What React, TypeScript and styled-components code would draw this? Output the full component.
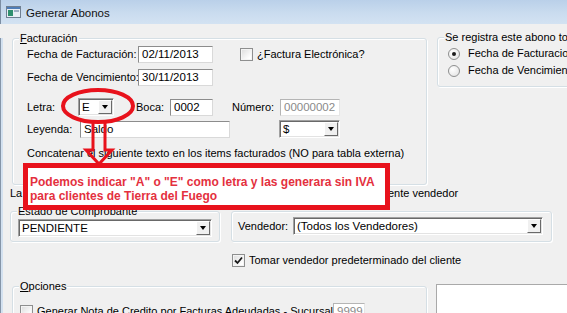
import React from 'react';
import styled, { createGlobalStyle } from 'styled-components';

const GlobalStyle = createGlobalStyle`
  html, body {
    margin: 0;
    padding: 0;
    background: #f0f0f0;
    overflow: hidden;
  }
  body {
    font-family: "Liberation Sans", Arial, sans-serif;
    font-size: 11px;
    color: #000;
  }
`;

const Window = styled.div`
  position: relative;
  width: 567px;
  height: 313px;
  overflow: hidden;
  background: #f0f0f0;
`;

const TitleBar = styled.div`
  height: 24px;
  box-sizing: border-box;
  display: flex;
  align-items: center;
  gap: 5px;
  padding-left: 6px;
  background: linear-gradient(#bad0e9, #cadcef 55%, #d3e2f2);
  box-shadow: inset 1px 0 0 #7d8ea3;
`;

const Title = styled.span`
  font-size: 11.5px;
  color: #111;
  padding-top: 1px;
`;

const Body = styled.div`
  height: 289px;
  box-shadow: inset 1px 0 0 #8595a8, inset 3px 0 0 #d3e1f0;
`;

const Row = styled.div<{ $top?: number; $left?: number; $gap?: number }>`
  display: flex;
  align-items: flex-start;
  margin-top: ${p => p.$top ?? 0}px;
  padding-left: ${p => p.$left ?? 0}px;
  gap: ${p => p.$gap ?? 0}px;
`;

const Group = styled.div<{ $w: number; $h: number; $shift?: number }>`
  position: relative;
  box-sizing: border-box;
  width: ${p => p.$w}px;
  height: ${p => p.$h}px;
  flex: none;
  margin-top: ${p => p.$shift ?? 0}px;
  border: 1px solid #d5dfe5;
  border-radius: 3px;
  box-shadow: inset 1px 1px 0 #fff, 1px 1px 0 #fff;
`;

const Legend = styled.span`
  position: absolute;
  top: -7px;
  left: 6px;
  padding: 0 1px;
  line-height: 13px;
  background: #f0f0f0;
  white-space: nowrap;
  u { text-decoration: underline; }
`;

const GroupBody = styled.div<{ $pt: number; $pl: number }>`
  padding: ${p => p.$pt}px 0 0 ${p => p.$pl}px;
`;

const Line = styled.div<{ $top?: number }>`
  display: flex;
  align-items: center;
  margin-top: ${p => p.$top ?? 0}px;
`;

const Label = styled.span<{ $w?: number; $ml?: number }>`
  flex: none;
  width: ${p => (p.$w ? `${p.$w}px` : 'auto')};
  margin-left: ${p => p.$ml ?? 0}px;
  line-height: 13px;
  white-space: nowrap;
`;

const Field = styled.div<{ $w: number; $muted?: boolean; $ml?: number }>`
  flex: none;
  box-sizing: border-box;
  width: ${p => p.$w}px;
  height: 17px;
  margin-left: ${p => p.$ml ?? 0}px;
  padding: 0 3px;
  background: #fff;
  border: 1px solid;
  border-color: ${p => (p.$muted ? '#b5b5b5 #e6e6e6 #e6e6e6 #b5b5b5' : '#8c8c8c #d9d9d9 #d9d9d9 #8c8c8c')};
  font-size: 11.5px;
  line-height: 15px;
  color: ${p => (p.$muted ? '#8a8a8a' : '#000')};
  white-space: nowrap;
  overflow: hidden;
`;

const Combo = styled.div<{ $w: number; $ml?: number }>`
  flex: none;
  display: flex;
  box-sizing: border-box;
  width: ${p => p.$w}px;
  height: 18px;
  margin-left: ${p => p.$ml ?? 0}px;
  background: #fff;
  border: 1px solid;
  border-color: #a0a0a0 #fff #fff #a0a0a0;
  box-shadow: inset 1px 1px 0 #696969, inset -1px -1px 0 #e3e3e3;
`;

const ComboText = styled.div`
  flex: 1;
  padding: 0 2px 0 3px;
  font-size: 11.5px;
  line-height: 16px;
  white-space: nowrap;
  overflow: hidden;
`;

const DropBtn = styled.div`
  flex: none;
  box-sizing: border-box;
  width: 14px;
  margin: 1px 1px 1px 0;
  display: flex;
  align-items: center;
  justify-content: center;
  background: #f0f0f0;
  border: 1px solid;
  border-color: #fff #696969 #696969 #fff;
  &::after {
    content: '';
    border-left: 3.5px solid transparent;
    border-right: 3.5px solid transparent;
    border-top: 4px solid #000;
  }
`;

const Box = styled.span<{ $ml?: number }>`
  flex: none;
  box-sizing: border-box;
  width: 13px;
  height: 13px;
  margin-left: ${p => p.$ml ?? 0}px;
  margin-right: 4px;
  display: flex;
  align-items: center;
  justify-content: center;
  border: 1px solid #8e8f8f;
  background: linear-gradient(135deg, #dcdcdc, #fff 80%);
  box-shadow: inset 0 0 0 1px #f4f4f4;
`;

const Radio = styled.span<{ $on?: boolean }>`
  flex: none;
  box-sizing: border-box;
  width: 12px;
  height: 12px;
  margin-right: 8px;
  border-radius: 50%;
  border: 1px solid #8e8f8f;
  background: radial-gradient(circle at 35% 35%, #fff, #e0e0e0);
  display: flex;
  align-items: center;
  justify-content: center;
  &::after {
    content: '';
    display: ${p => (p.$on ? 'block' : 'none')};
    width: 4px;
    height: 4px;
    border-radius: 50%;
    background: #1c1c1c;
  }
`;

const InfoLine = styled.div`
  margin-top: 2px;
  padding-left: 10px;
  line-height: 13px;
  white-space: nowrap;
`;

const WhiteBox = styled.div`
  flex: 1;
  height: 40px;
  margin-top: -2px;
  background: #fff;
  border: 1px solid #a9a9a9;
  border-right: none;
`;

const Callout = styled.div`
  position: absolute;
  left: 23px;
  top: 163px;
  z-index: 3;
  box-sizing: border-box;
  width: 367px;
  height: 47px;
  padding: 7px 0 0 2px;
  background: #fff;
  border: 5px solid #e8121c;
  font-size: 12px;
  font-weight: bold;
  line-height: 14px;
  color: #e4303e;
  white-space: nowrap;
`;

const Marks = styled.svg`
  position: absolute;
  left: 0;
  top: 0;
  z-index: 2;
  pointer-events: none;
`;

const Tick = () => (
  <svg width="9" height="9" viewBox="0 0 9 9">
    <polyline points="1,4.5 3.5,7 8,1.5" fill="none" stroke="#1a1a1a" strokeWidth="1.8" />
  </svg>
);

const AppIcon = () => (
  <svg width="15" height="12" viewBox="0 0 15 12">
    <rect x="0.5" y="0.5" width="14" height="11" fill="#e8eef5" stroke="#6f7f92" />
    <rect x="1" y="1" width="13" height="2" fill="#4f7db7" />
    <rect x="2" y="4" width="5" height="6" fill="#2f8f6f" />
    <rect x="8" y="4" width="5" height="2" fill="#9fb0c4" />
  </svg>
);

export default function App() {
  return (
    <Window>
      <GlobalStyle />
      <TitleBar>
        <AppIcon />
        <Title>Generar Abonos</Title>
      </TitleBar>
      <Body>
        <Row $top={14} $left={12} $gap={10}>
          <Group $w={415} $h={147}>
            <Legend><u>F</u>acturación</Legend>
            <GroupBody $pt={7} $pl={14}>
              <Line>
                <Label $w={111}>Fecha de Facturación:</Label>
                <Field $w={75}>02/11/2013</Field>
                <Box $ml={27} />
                <Label>¿Factura Electrónica?</Label>
              </Line>
              <Line $top={6}>
                <Label $w={111}>Fecha de Vencimiento:</Label>
                <Field $w={75}>30/11/2013</Field>
              </Line>
              <Line $top={12}>
                <Label $w={51}>Letra:</Label>
                <Combo $w={36}>
                  <ComboText>E</ComboText>
                  <DropBtn />
                </Combo>
                <Label $w={34} $ml={22}>Boca:</Label>
                <Field $w={43}>0002</Field>
                <Label $w={48} $ml={19}>Número:</Label>
                <Field $w={60} $muted>00000002</Field>
              </Line>
              <Line $top={4}>
                <Label $w={53}>Leyenda:</Label>
                <Field $w={150}>Saldo</Field>
                <Combo $w={61} $ml={49}>
                  <ComboText>$</ComboText>
                  <DropBtn />
                </Combo>
              </Line>
              <Line $top={9}>
                <Label>Concatenar el siguiente texto en los items facturados (NO para tabla externa)</Label>
              </Line>
            </GroupBody>
          </Group>
          <Group $w={160} $h={50} $shift={-1}>
            <Legend>Se registra este abono tomando la fecha de</Legend>
            <GroupBody $pt={9} $pl={10}>
              <Line>
                <Radio $on />
                <Label>Fecha de Facturacion</Label>
              </Line>
              <Line $top={4}>
                <Radio />
                <Label>Fecha de Vencimiento</Label>
              </Line>
            </GroupBody>
          </Group>
        </Row>

        <InfoLine>La factura se asignara al vendedor fijado en la ficha del cliente, o bien al siguiente vendedor</InfoLine>

        <Row $top={11} $left={10} $gap={11}>
          <Group $w={210} $h={31}>
            <Legend>Estado de Comprobante</Legend>
            <GroupBody $pt={7} $pl={7}>
              <Combo $w={194}>
                <ComboText>PENDIENTE</ComboText>
                <DropBtn />
              </Combo>
            </GroupBody>
          </Group>
          <Group $w={321} $h={31}>
            <GroupBody $pt={5} $pl={6}>
              <Line>
                <Label $w={55}>Vendedor:</Label>
                <Combo $w={250}>
                  <ComboText>(Todos los Vendedores)</ComboText>
                  <DropBtn />
                </Combo>
              </Line>
            </GroupBody>
          </Group>
        </Row>

        <Row $top={12} $left={232}>
          <Line>
            <Box><Tick /></Box>
            <Label>Tomar vendedor predeterminado del cliente</Label>
          </Line>
        </Row>

        <Row $top={19} $left={12} $gap={9}>
          <Group $w={415} $h={40}>
            <Legend><u>O</u>pciones</Legend>
            <GroupBody $pt={16} $pl={7}>
              <Line>
                <Box />
                <Label $w={296}>Generar Nota de Credito por Facturas Adeudadas - Sucursal:</Label>
                <Field $w={32} $muted>9999</Field>
              </Line>
            </GroupBody>
          </Group>
          <WhiteBox />
        </Row>
      </Body>

      <Marks width="567" height="313" viewBox="0 0 567 313">
        <ellipse cx="98" cy="106" rx="35" ry="16" fill="none" stroke="#e8121c" strokeWidth="4" />
        <path
          d="M93 123 L93 150 L86 150 L99 164 L112 150 L105 150 L105 123"
          fill="none"
          stroke="#e8121c"
          strokeWidth="3"
          strokeLinejoin="miter"
        />
      </Marks>

      <Callout>
        Podemos indicar "A" o "E" como letra y las generara sin IVA
        <br />
        para clientes de Tierra del Fuego
      </Callout>
    </Window>
  );
}
